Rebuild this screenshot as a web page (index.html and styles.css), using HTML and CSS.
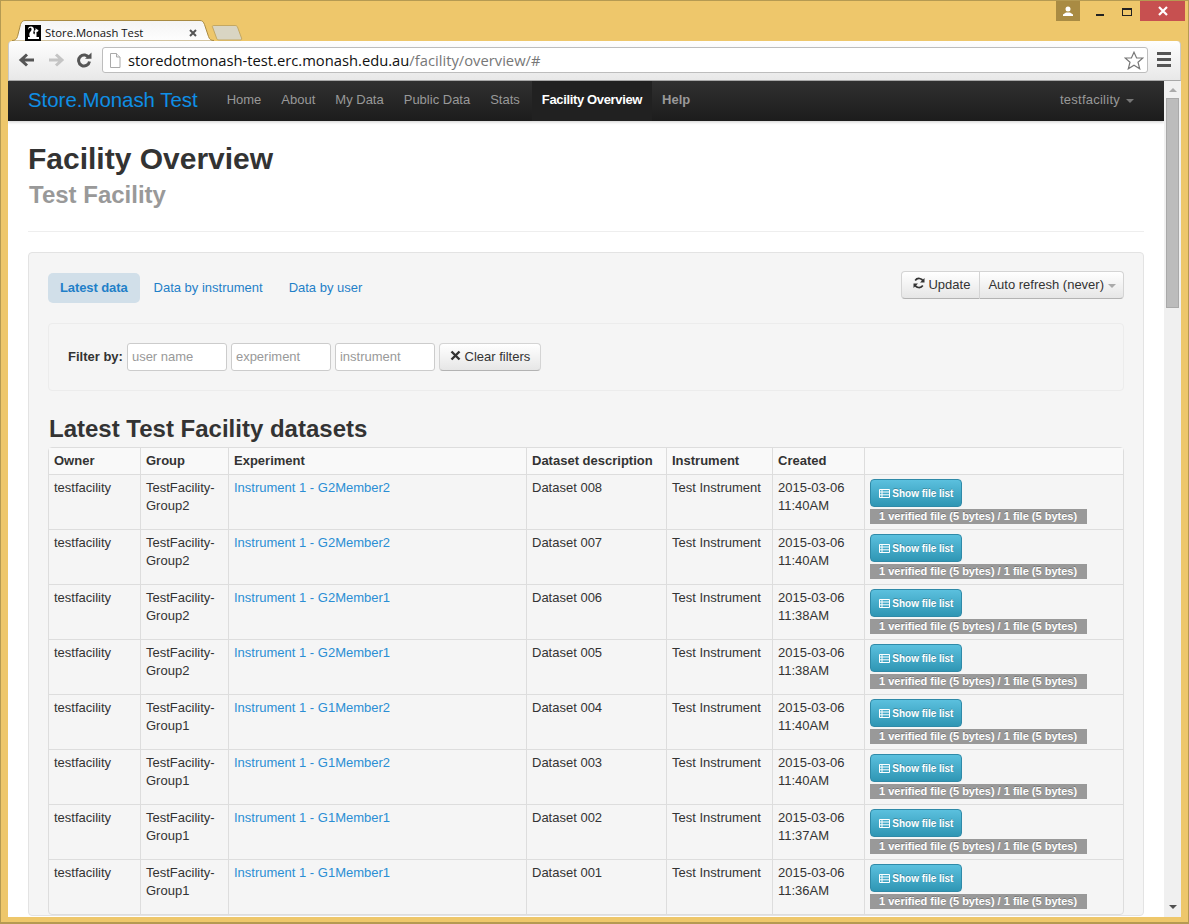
FILE: index.html
```html
<!DOCTYPE html>
<html lang="en">
<head>
<meta charset="utf-8">
<title>Store.Monash Test</title>
<link rel="stylesheet" href="styles.css">
</head>
<body>
<div class="window">
  <div class="titlebar">
    <div class="tabstrip">
      <div class="tab">
        <svg class="tab-shape" width="202" height="21" viewBox="0 0 202 21"><defs><linearGradient id="tabfill" x1="0" y1="0" x2="0" y2="1"><stop offset="0" stop-color="#f4f4f4"/><stop offset="1" stop-color="#fefefe"/></linearGradient></defs><path d="M0 20.500C3 20.500 4.500 19.500 5.500 16.500L8.500 4.500C9.300 2 10.500 .5 13 .5H188C190.500 .5 191.500 2 192.500 4.500L196.500 16.500C197.500 19.500 199 20.500 202 20.500V21H0Z" fill="url(#tabfill)" stroke="#a98b43"/></svg>
        <svg class="favicon" width="16" height="16" viewBox="0 0 16 16"><rect width="16" height="16" fill="#000"/><path d="M3 14V12H5C4 10 4 8 5.500 6.500C6.500 5.500 7 4 6 3C5 2.500 3.500 3.500 3.500 5C2.500 3 4 1 6.500 1.500C9 2 9.500 4.500 8.500 6.500C8 8 8.500 9 9.500 9.500L10 7L9 6L10.500 5V3L12 4.500L13.500 5L13 6.500L11.500 7L11.500 12H14V14Z" fill="#fff"/></svg>
        <span class="tab-title">Store.Monash Test</span>
        <svg class="tab-close" width="8" height="8" viewBox="0 0 8 8"><path d="M1 1L7 7M7 1L1 7" stroke="#555" stroke-width="2"/></svg>
      </div>
      <svg class="newtab" width="32" height="16" viewBox="0 0 32 16"><path d="M1.500 2C1 1 1.500 .5 3 .5H24C25.500 .5 26 1 26.500 2L30.500 13C31 14.500 30.500 15 29 15H8C6.500 15 6 14.500 5.500 13Z" fill="#d9d5c3" stroke="#c4a862"/></svg>
    </div>
    <div class="controls">
      <div class="ctl-user"><svg width="12" height="10" viewBox="0 0 12 10"><circle cx="6" cy="3" r="2.500" fill="#fff"/><path d="M1 10V8.500L4 6.500H8L11 8.500V10Z" fill="#fff"/></svg></div>
      <div class="ctl-btn"><span class="ctl-min"></span></div>
      <div class="ctl-btn"><span class="ctl-max"></span></div>
      <div class="ctl-close"><svg width="10" height="10" viewBox="0 0 10 10"><path d="M1 1L9 9M9 1L1 9" stroke="#fff" stroke-width="2.200"/></svg></div>
    </div>
  </div>

  <div class="toolbar">
    <svg class="tool" width="18" height="16" viewBox="0 0 18 16"><path d="M16 8H4M9 2.500L3 8L9 13.500" fill="none" stroke="#555" stroke-width="3"/></svg>
    <svg class="tool" width="18" height="16" viewBox="0 0 18 16"><path d="M2 8H14M9 2.500L15 8L9 13.500" fill="none" stroke="#c4c4c4" stroke-width="3"/></svg>
    <svg class="tool" width="16" height="16" viewBox="0 0 16 16"><path d="M13 6A5.500 5.500 0 1 0 13.500 9.500" fill="none" stroke="#555" stroke-width="3"/><path d="M9 6.800H15.500V0.500Z" fill="#555"/></svg>
    <div class="omnibox">
      <svg class="page-ico" width="12" height="15" viewBox="0 0 12 15"><path d="M1.500 .5H7.500L11 4V14.500H1.500Z" fill="#fff" stroke="#aaa"/><path d="M7.500 .5V4H11" fill="#eee" stroke="#aaa"/></svg>
      <span class="url"><span class="url-host">storedotmonash-test.erc.monash.edu.au</span>/facility/overview/#</span>
      <svg class="star" width="20" height="19" viewBox="0 0 20 19"><path d="M10 1.200L12.600 7H18.900L14 11.200L15.700 17.800L10 14.300L4.300 17.800L6 11.200L1.100 7H7.400Z" fill="#fff" stroke="#777" stroke-width="1.200"/></svg>
    </div>
    <div class="hamburger"><span></span><span></span><span></span></div>
  </div>

  <div class="viewport">
    <div class="page">
      <nav class="navbar">
        <a class="brand">Store.Monash Test</a>
        <ul class="nav">
          <li>Home</li><li>About</li><li>My Data</li><li>Public Data</li><li>Stats</li>
          <li class="active">Facility Overview</li>
          <li class="help">Help</li>
        </ul>
        <div class="nav-user">testfacility<span class="caret caret-nav"></span></div>
      </nav>
      <main class="main">
        <header class="page-header">
          <h1>Facility Overview</h1>
          <h2>Test Facility</h2>
        </header>
        <section class="well">
          <div class="well-top">
            <ul class="pills">
              <li class="pill pill-active">Latest data</li>
              <li class="pill">Data by instrument</li>
              <li class="pill">Data by user</li>
            </ul>
            <div class="btn-group">
              <button class="btn btn-left"><svg width="12" height="12" viewBox="0 0 12 12"><path d="M10.200 4.500A4.500 4.500 0 0 0 2.200 3.500M1.800 7.500A4.500 4.500 0 0 0 9.800 8.500" fill="none" stroke="#333" stroke-width="1.700"/><path d="M11.500 1V5.500H7ZM.5 11V6.500H5Z" fill="#333"/></svg> Update</button>
              <button class="btn btn-right">Auto refresh (never)<span class="caret"></span></button>
            </div>
          </div>
          <form class="filter">
            <label class="filter-label">Filter by:</label>
            <input class="filter-input" placeholder="user name">
            <input class="filter-input" placeholder="experiment">
            <input class="filter-input" placeholder="instrument">
            <button class="btn btn-clear" type="button"><svg width="11" height="11" viewBox="0 0 11 11"><path d="M1.500 1.500L9.500 9.500M9.500 1.500L1.500 9.500" stroke="#333" stroke-width="2.400"/></svg> Clear filters</button>
          </form>
          <h3>Latest Test Facility datasets</h3>
          <table class="data">
            <thead>
              <tr><th class="c1">Owner</th><th class="c2">Group</th><th class="c3">Experiment</th><th class="c4">Dataset description</th><th class="c5">Instrument</th><th class="c6">Created</th><th class="c7"></th></tr>
            </thead>
            <tbody>
              <tr><td>testfacility</td><td>TestFacility-Group2</td><td><a>Instrument 1 - G2Member2</a></td><td>Dataset 008</td><td>Test Instrument</td><td>2015-03-06 11:40AM</td><td class="act"><button class="btn-info"><svg class="list-ico" width="11" height="9" viewBox="0 0 11 9"><path d="M.5 .5H10.500V8.500H.5ZM.5 3H10.500M.5 5.800H10.500M3 .5V8.500" fill="none" stroke="#fff"/></svg> Show file list</button><span class="label">1 verified file (5 bytes) / 1 file (5 bytes)</span></td></tr>
              <tr><td>testfacility</td><td>TestFacility-Group2</td><td><a>Instrument 1 - G2Member2</a></td><td>Dataset 007</td><td>Test Instrument</td><td>2015-03-06 11:40AM</td><td class="act"><button class="btn-info"><svg class="list-ico" width="11" height="9" viewBox="0 0 11 9"><path d="M.5 .5H10.500V8.500H.5ZM.5 3H10.500M.5 5.800H10.500M3 .5V8.500" fill="none" stroke="#fff"/></svg> Show file list</button><span class="label">1 verified file (5 bytes) / 1 file (5 bytes)</span></td></tr>
              <tr><td>testfacility</td><td>TestFacility-Group2</td><td><a>Instrument 1 - G2Member1</a></td><td>Dataset 006</td><td>Test Instrument</td><td>2015-03-06 11:38AM</td><td class="act"><button class="btn-info"><svg class="list-ico" width="11" height="9" viewBox="0 0 11 9"><path d="M.5 .5H10.500V8.500H.5ZM.5 3H10.500M.5 5.800H10.500M3 .5V8.500" fill="none" stroke="#fff"/></svg> Show file list</button><span class="label">1 verified file (5 bytes) / 1 file (5 bytes)</span></td></tr>
              <tr><td>testfacility</td><td>TestFacility-Group2</td><td><a>Instrument 1 - G2Member1</a></td><td>Dataset 005</td><td>Test Instrument</td><td>2015-03-06 11:38AM</td><td class="act"><button class="btn-info"><svg class="list-ico" width="11" height="9" viewBox="0 0 11 9"><path d="M.5 .5H10.500V8.500H.5ZM.5 3H10.500M.5 5.800H10.500M3 .5V8.500" fill="none" stroke="#fff"/></svg> Show file list</button><span class="label">1 verified file (5 bytes) / 1 file (5 bytes)</span></td></tr>
              <tr><td>testfacility</td><td>TestFacility-Group1</td><td><a>Instrument 1 - G1Member2</a></td><td>Dataset 004</td><td>Test Instrument</td><td>2015-03-06 11:40AM</td><td class="act"><button class="btn-info"><svg class="list-ico" width="11" height="9" viewBox="0 0 11 9"><path d="M.5 .5H10.500V8.500H.5ZM.5 3H10.500M.5 5.800H10.500M3 .5V8.500" fill="none" stroke="#fff"/></svg> Show file list</button><span class="label">1 verified file (5 bytes) / 1 file (5 bytes)</span></td></tr>
              <tr><td>testfacility</td><td>TestFacility-Group1</td><td><a>Instrument 1 - G1Member2</a></td><td>Dataset 003</td><td>Test Instrument</td><td>2015-03-06 11:40AM</td><td class="act"><button class="btn-info"><svg class="list-ico" width="11" height="9" viewBox="0 0 11 9"><path d="M.5 .5H10.500V8.500H.5ZM.5 3H10.500M.5 5.800H10.500M3 .5V8.500" fill="none" stroke="#fff"/></svg> Show file list</button><span class="label">1 verified file (5 bytes) / 1 file (5 bytes)</span></td></tr>
              <tr><td>testfacility</td><td>TestFacility-Group1</td><td><a>Instrument 1 - G1Member1</a></td><td>Dataset 002</td><td>Test Instrument</td><td>2015-03-06 11:37AM</td><td class="act"><button class="btn-info"><svg class="list-ico" width="11" height="9" viewBox="0 0 11 9"><path d="M.5 .5H10.500V8.500H.5ZM.5 3H10.500M.5 5.800H10.500M3 .5V8.500" fill="none" stroke="#fff"/></svg> Show file list</button><span class="label">1 verified file (5 bytes) / 1 file (5 bytes)</span></td></tr>
              <tr><td>testfacility</td><td>TestFacility-Group1</td><td><a>Instrument 1 - G1Member1</a></td><td>Dataset 001</td><td>Test Instrument</td><td>2015-03-06 11:36AM</td><td class="act"><button class="btn-info"><svg class="list-ico" width="11" height="9" viewBox="0 0 11 9"><path d="M.5 .5H10.500V8.500H.5ZM.5 3H10.500M.5 5.800H10.500M3 .5V8.500" fill="none" stroke="#fff"/></svg> Show file list</button><span class="label">1 verified file (5 bytes) / 1 file (5 bytes)</span></td></tr>
            </tbody>
          </table>
        </section>
      </main>
    </div>
    <div class="scrollbar">
      <span class="arrow-up"></span>
      <div class="thumb"></div>
      <div class="track"></div>
      <span class="arrow-down"></span>
    </div>
  </div>
</div>
</body>
</html>
```
FILE: styles.css
```css
* { box-sizing: border-box; }
html, body { margin: 0; padding: 0; height: 100%; overflow: hidden; }
body { font-family: "Liberation Sans", Arial, sans-serif; font-size: 13px; line-height: 18px; color: #333; }

.window { width: 1189px; height: 924px; background: #eec76b; border: 1px solid #b59a52; border-bottom-width: 2px; padding: 0 7px 5px 7px; display: flex; flex-direction: column; }

.titlebar { height: 40px; flex: none; display: flex; justify-content: space-between; align-items: flex-start; }
.tabstrip { display: flex; align-items: flex-end; height: 40px; padding-left: 4px; }
.tab { position: relative; width: 202px; height: 21px; display: flex; align-items: flex-end; padding: 0 17px 0 13px; font-family: "Open Sans", sans-serif; font-size: 11.300px; line-height: 17px; color: #111; }
.tab-shape { position: absolute; left: 0; top: 0; }
.favicon { position: relative; flex: none; margin-right: 4px; }
.tab-title { position: relative; flex: 1; white-space: nowrap; }
.tab-close { position: relative; flex: none; margin-bottom: 4px; }
.newtab { flex: none; margin: 0 0 0 -3px; }

.controls { display: flex; height: 20px; margin-right: -4px; }
.ctl-user { width: 24px; height: 20px; background: #a98b43; display: flex; align-items: center; justify-content: center; margin-right: 6px; }
.ctl-btn { width: 27px; height: 20px; display: flex; align-items: center; justify-content: center; }
.ctl-min { width: 8px; height: 2px; background: #222; margin-top: 7px; }
.ctl-max { width: 10px; height: 8px; border: 1px solid #222; border-top-width: 2px; margin-top: 2px; }
.ctl-close { width: 45px; height: 20px; background: #c75050; display: flex; align-items: center; justify-content: center; }

.toolbar { height: 40px; flex: none; background: linear-gradient(#fefefe, #e8e8e8); border: 1px solid #c9c9c9; border-top: 0; border-bottom: 1px solid #a8a8a8; border-radius: 4px 4px 0 0; display: flex; align-items: center; padding: 0 9px 2px 9px; }
.tool { flex: none; margin-right: 11px; }
.tool:nth-child(3) { margin-right: 10px; }
.omnibox { flex: 1; height: 26px; margin-top: 1px; background: #fff; border: 1px solid #bdbdbd; border-radius: 3px; display: flex; align-items: center; padding: 0 3px 0 6px; }
.page-ico { flex: none; margin-right: 7px; }
.url { flex: 1; font-family: "Open Sans", sans-serif; font-size: 14.750px; color: #777; white-space: nowrap; }
.url-host { color: #111; }
.star { flex: none; }
.hamburger { flex: none; width: 14px; margin-left: 9px; display: flex; flex-direction: column; gap: 3px; }
.hamburger span { display: block; height: 3px; background: #555; }

.viewport { flex: 1; min-height: 0; display: flex; overflow: hidden; }
.page { flex: 1; min-width: 0; background: #fff; overflow: hidden; }

.navbar { position: relative; height: 40px; background: linear-gradient(#303030, #1c1c1c); box-shadow: 0 1px 3px rgba(0,0,0,.2); display: flex; align-items: stretch; padding: 0 30px 0 20px; }
.brand { font-size: 20.400px; line-height: 38px; color: #0f8fe6; margin-right: 19px; white-space: nowrap; }
.nav { list-style: none; margin: 0; padding: 0; display: flex; flex: 1; }
.nav li { padding: 0 10px; line-height: 37px; color: #999; white-space: nowrap; }
.nav .active { margin-left: 2px; color: #fff; font-weight: bold; letter-spacing: -.35px; background: #212121; }
.nav .help { font-weight: bold; }
.nav-user { line-height: 37px; color: #999; white-space: nowrap; letter-spacing: .25px; }

.caret { display: inline-block; width: 0; height: 0; border-left: 4px solid transparent; border-right: 4px solid transparent; border-top: 4px solid #aaa; margin-left: 4px; vertical-align: middle; }
.caret-nav { border-top-color: #777; margin-left: 6px; }

.main { padding: 0 20px; }
.page-header { height: 111px; border-bottom: 1px solid #eee; padding-top: 20px; margin-bottom: 20px; }
h1 { margin: 0; font-size: 30px; line-height: 36px; font-weight: bold; color: #333; }
h2 { margin: 0; padding-left: 1px; font-size: 24px; line-height: 36px; font-weight: bold; color: #999; }

.well { background: #f5f5f5; border: 1px solid #e3e3e3; border-radius: 4px; padding: 20px 19px 0; }
.well-top { display: flex; justify-content: space-between; align-items: flex-start; margin-bottom: 20px; }
.pills { list-style: none; margin: 0; padding: 0; display: flex; gap: 2px; }
.pill { padding: 6px 12px; line-height: 18px; color: #1f80c8; white-space: nowrap; border-radius: 5px; }
.pill-active { background: #d1dfe9; font-weight: bold; letter-spacing: -.1px; }

.btn { font-family: "Liberation Sans", Arial, sans-serif; font-size: 13px; line-height: 18px; color: #333; background: linear-gradient(#fff, #e6e6e6); border: 1px solid #d4d4d4; border-bottom-color: #b3b3b3; padding: 4px 8px; white-space: nowrap; box-shadow: inset 0 1px 0 rgba(255,255,255,.2); }
.btn-group { display: flex; margin-top: -2px; }
.btn-left { border-radius: 4px 0 0 4px; padding: 4px 9px 4px 11px; }
.btn-right { border-radius: 0 4px 4px 0; border-left: 0; padding: 4px 7px 4px 8px; }
.btn-clear { border-radius: 4px; height: 28px; padding: 3px 10px; }

.filter { height: 68px; border: 1px solid #ececec; border-radius: 4px; display: flex; align-items: center; gap: 4px; padding: 0 19px; margin-bottom: 24px; }
.filter-label { font-weight: bold; }
.filter-input { width: 100px; height: 28px; font-family: "Liberation Sans", Arial, sans-serif; font-size: 13px; padding: 0 4px 2px; background: #fff; border: 1px solid #ccc; border-radius: 3px; color: #333; }
.filter-input::placeholder { color: #999; opacity: 1; }

h3 { margin: 0; padding-left: 1px; font-size: 24px; line-height: 28px; font-weight: bold; color: #333; height: 32px; }

.data { width: 1076px; border-collapse: separate; border-spacing: 0; table-layout: fixed; border: 1px solid #ddd; border-radius: 4px; }
.data th { text-align: left; font-weight: bold; padding: 4px 5px; height: 26px; background: #f9f9f9; border-left: 1px solid #ddd; }
.data td { vertical-align: top; padding: 4px 5px; height: 55px; border-top: 1px solid #ddd; border-left: 1px solid #ddd; }
.data th:first-child, .data td:first-child { border-left: 0; }
.data a { color: #2a8ed4; }
.c1 { width: 91px; }
.c2 { width: 88px; }
.c3 { width: 298px; }
.c4 { width: 140px; }
.c5 { width: 106px; }
.c6 { width: 92px; }
.data .act { padding: 4px 5px 0; }
.btn-info { display: block; width: 92px; height: 28px; padding: 0; font-family: "Liberation Sans", Arial, sans-serif; font-size: 10px; font-weight: bold; color: #fff; background: linear-gradient(#5bc0de, #2f96b4); border: 1px solid #2f8aa8; border-radius: 4px; white-space: nowrap; text-shadow: 0 -1px 0 rgba(0,0,0,.25); }
.list-ico { vertical-align: -1px; }
.label { display: block; width: 217px; height: 15px; margin-top: 2px; padding: 0 9px; background: #999; color: #fff; font-size: 11px; line-height: 14px; font-weight: bold; white-space: nowrap; text-shadow: 0 -1px 0 rgba(0,0,0,.25); }

.scrollbar { flex: none; width: 17px; background: #f0f0f0; display: flex; flex-direction: column; align-items: center; }
.arrow-up { flex: none; margin: 7px 0 6px; border-left: 4px solid transparent; border-right: 4px solid transparent; border-bottom: 4px solid #aaa; }
.thumb { flex: none; width: 13px; height: 210px; background: #bcbcbc; border: 1px solid #a9a9a9; }
.track { flex: 1; }
.arrow-down { flex: none; margin: 0 0 8px; border-left: 4px solid transparent; border-right: 4px solid transparent; border-top: 4px solid #505050; }
```
